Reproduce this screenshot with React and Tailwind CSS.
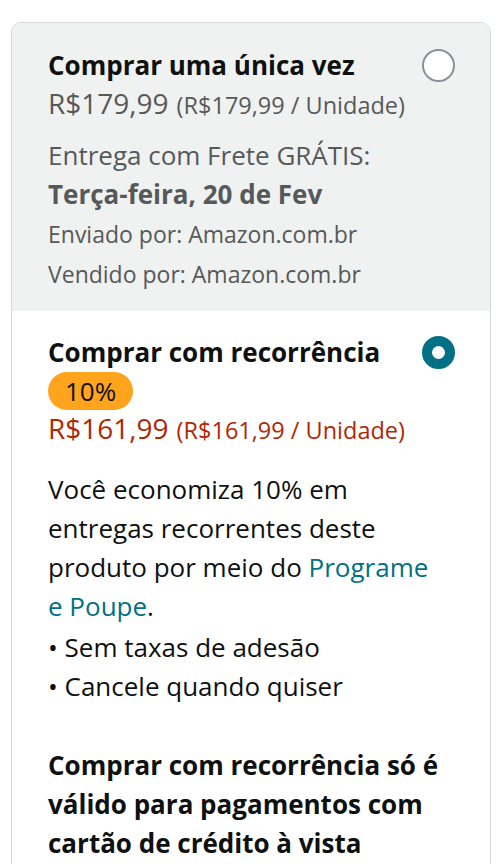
import React from 'react';

const font = { fontFamily: '"Open Sans", "Noto Sans", Arial, sans-serif' };

const Radio = ({ checked }) =>
  checked ? (
    <span className="block w-[33px] h-[33px] shrink-0 rounded-full border-[10px] border-[#007185] bg-white" />
  ) : (
    <span className="block w-[33px] h-[33px] shrink-0 rounded-full border-2 border-[#8D9096] bg-white" />
  );

const App = () => {
  return (
    <div className="min-h-screen bg-white pt-[22px] pl-[11px] overflow-hidden" style={font}>
      <div className="w-[480px] rounded-t-[10px] border border-[#D5D9D9] overflow-hidden">
        {/* one time purchase */}
        <div className="bg-[#F0F1F1] pl-[36px] pr-[35px] pt-[23px] pb-[17px]">
          <div className="flex items-center justify-between">
            <span className="text-[26px] leading-[39px] font-bold text-[#0F1111] whitespace-nowrap">Comprar uma única vez</span>
            <Radio />
          </div>
          <div className="text-[24px] leading-[40px] text-[#565959] whitespace-nowrap">
            <span className="text-[28px] leading-none">R$179,99</span>
            <span className="ml-[8px] text-[23.5px] leading-none">(R$179,99 / Unidade)</span>
          </div>
          <div className="mt-[11px] text-[26px] leading-[39px] text-[#565959] whitespace-nowrap">
            <div>Entrega com Frete GRÁTIS:</div>
            <div className="font-bold">Terça-feira, 20 de Fev</div>
          </div>
          <div className="text-[23px] leading-[40px] text-[#565959] whitespace-nowrap">
            <div>Enviado por: Amazon.com.br</div>
            <div>Vendido por: Amazon.com.br</div>
          </div>
        </div>

        {/* subscribe and save */}
        <div className="bg-white pl-[36px] pr-[35px] pt-[22px] pb-[40px]">
          <div className="flex items-center justify-between">
            <span className="text-[26px] leading-[39px] font-bold text-[#0F1111] whitespace-nowrap">Comprar com recorrência</span>
            <Radio checked />
          </div>
          <div className="flex">
            <span className="h-[38px] px-[17px] rounded-full bg-[#FFA41C] text-[26px] leading-[38px] text-[#0F1111]">10%</span>
          </div>
          <div className="text-[24px] leading-[40px] text-[#B12704] whitespace-nowrap">
            <span className="text-[28px] leading-none">R$161,99</span>
            <span className="ml-[8px] text-[23.5px] leading-none">(R$161,99 / Unidade)</span>
          </div>
          <div className="mt-[20px] text-[26px] leading-[39px] text-[#0F1111] whitespace-nowrap">
            <p>
              Você economiza 10% em<br />
              entregas recorrentes deste<br />
              produto por meio do <a href="#" className="text-[#007185]">Programe<br />e Poupe</a>.
            </p>
            <div className="mt-[2px]">• Sem taxas de adesão</div>
            <div>• Cancele quando quiser</div>
            <div className="mt-[40px] font-bold">
              Comprar com recorrência só é<br />
              válido para pagamentos com<br />
              cartão de crédito à vista
            </div>
          </div>
        </div>
      </div>
    </div>
  );
};

export default App;
